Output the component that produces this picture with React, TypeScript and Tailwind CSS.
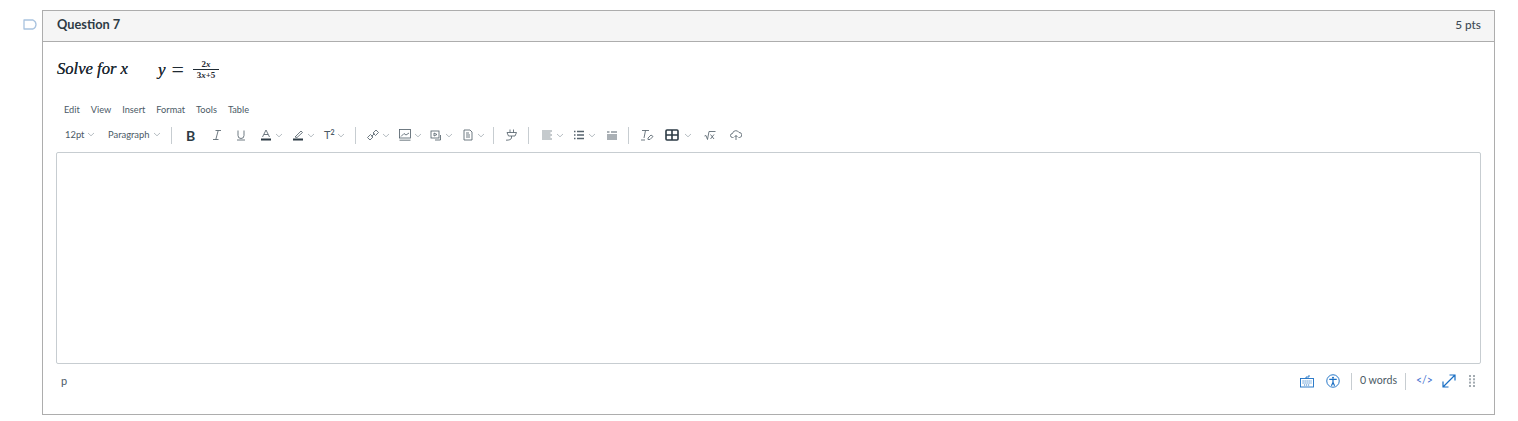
import React from 'react';

const Chevron = ({ className = 'ml-[3px]' }: { className?: string }) => (
  <svg width="8" height="5" viewBox="0 0 8 5" fill="none" stroke="#98a2a9" strokeWidth="0.7" className={className}>
    <path d="M1 1 L4 3.8 L7 1" />
  </svg>
);

const Divider = () => <div className="h-[17px] w-px bg-[#c7cdd1]" />;

const Ico = ({ children, w = 12 }: { children: React.ReactNode; w?: number }) => (
  <svg width={w} height="12" viewBox={`0 0 ${w} 12`} fill="none" stroke="#56636d" strokeWidth="0.85">
    {children}
  </svg>
);

export default function App() {
  return (
    <div className="flex h-[421px] w-[1518px] bg-white pt-[10px] font-['Lato','Noto_Sans',sans-serif] text-[#2d3b45]">
      {/* Flag */}
      <div className="w-[42px] pl-[23px] pt-[9px]">
        <svg width="14" height="11" viewBox="0 0 14 11" fill="none" stroke="#a9c3df" strokeWidth="1.3">
          <path d="M1 1 H10 Q13 2.5 13 5.5 Q13 8.5 10 10 H1 Z" strokeLinejoin="round" />
        </svg>
      </div>

      {/* Question card */}
      <div className="h-[405px] w-[1453px] border border-[#adadad]">
        <div className="flex h-[31px] items-center justify-between border-b border-[#adadad] bg-[#f5f5f5] pb-[2px] pl-[14px] pr-[13px]">
          <span className="text-[12.8px] font-bold">Question 7</span>
          <span className="text-[11.8px] font-medium text-[#3d4b56]">5 pts</span>
        </div>

        <div className="px-[13px]">
          {/* Prompt */}
          <div className="flex h-[60px] items-center pb-[5px] pl-[1px] font-['Liberation_Serif',serif] text-[#1f2a33]">
            <span className="w-[101px] text-[16.6px] italic [text-shadow:0_0_0.3px_#1f2a33]">Solve for x</span>
            <span className="text-[17px] italic [text-shadow:0_0_0.3px_#1f2a33]">y</span>
            <span className="ml-[6px] text-[22px] leading-none">=</span>
            <span className="ml-[9px] flex flex-col items-center text-[9px] font-bold leading-[10px]">
              <span className="w-[26px] border-b border-[#1f2a33] text-center">2<i>x</i></span>
              <span>3<i>x</i>+5</span>
            </span>
          </div>

          {/* Menu bar */}
          <div className="flex h-[16px] items-center gap-[11px] pl-[8px] text-[9.2px] text-[#4b5a66]">
            <span>Edit</span>
            <span>View</span>
            <span>Insert</span>
            <span>Format</span>
            <span>Tools</span>
            <span>Table</span>
          </div>

          {/* Toolbar */}
          <div className="mt-[6px] flex h-[22px] items-center pl-[9px] text-[9.4px] text-[#4b5a66]">
            <span className="flex w-[43px] items-center">12pt<Chevron /></span>
            <span className="flex w-[63px] items-center">Paragraph<Chevron className="ml-[3px]" /></span>
            <Divider />
            <span className="ml-[14px] w-[25px] text-[14px] font-bold text-[#2d3b45]">B</span>
            <span className="flex w-[24px]">
              <Ico><path d="M4.5 1.5 H10 M7.2 1.5 L4.8 10.5 M2 10.5 H7.5" /></Ico>
            </span>
            <span className="flex w-[25px]">
              <Ico><path d="M3 1.5 V6.5 A3 3 0 0 0 9 6.5 V1.5 M2 11 H10" /></Ico>
            </span>
            <span className="flex w-[32px] items-center">
              <Ico><path d="M2.5 8 L6 1 L9.5 8 M4 5.5 H8" /><rect x="1" y="9.5" width="10" height="2" fill="#2d3b45" stroke="none" /></Ico>
              <Chevron />
            </span>
            <span className="flex w-[32px] items-center">
              <Ico><path d="M3 8 L9 2 L10.5 3.5 L5 8.5 Z" /><rect x="1" y="9.5" width="10" height="2" fill="#2d3b45" stroke="none" /></Ico>
              <Chevron />
            </span>
            <span className="flex w-[31px] items-center text-[11px]">T<sup className="text-[7px] font-bold">2</sup><Chevron className="ml-[2px]" /></span>
            <Divider />
            <span className="ml-[11px] flex w-[32px] items-center">
              <Ico><path d="M0.5 8.5 L3.5 5.5 L6 8 L3 11 Z M6 4 L9 1 L11.5 3.5 L8.5 6.5 Z M4.5 7.5 L7.5 4.5" /></Ico>
              <Chevron />
            </span>
            <span className="flex w-[31px] items-center">
              <Ico><rect x="0.5" y="0.5" width="11" height="8.5" /><path d="M2 7.5 L5 4.5 L7 6 L10 4 M0.5 11.2 H11.5" /></Ico>
              <Chevron />
            </span>
            <span className="flex w-[32px] items-center">
              <Ico><rect x="1" y="2" width="8" height="7" /><path d="M4 4 L7 5.5 L4 7 Z M10.5 6 V11 H5" /></Ico>
              <Chevron />
            </span>
            <span className="flex w-[31px] items-center">
              <Ico><path d="M2 1 H8 L10 3 V11 H2 Z M4 4 H7 M4 6 H8 M4 8 H8" /></Ico>
              <Chevron />
            </span>
            <Divider />
            <span className="ml-[11px] flex w-[23px]">
              <Ico><path d="M2 3.5 H11.5 L10 7 H3.5 Z M5 0.5 V3.5 M8.5 0.5 V3.5 M6.5 7 V9 Q6 11.2 1 11.2" /></Ico>
            </span>
            <Divider />
            <span className="ml-[12px] flex w-[32px] items-center">
              <Ico><path d="M1 2 H11 M1 4 H9.5 M1 6 H11 M1 8 H9.5 M1 10 H11" stroke="#c5cacd" strokeWidth="2" /></Ico>
              <Chevron />
            </span>
            <span className="flex w-[33px] items-center">
              <Ico><path d="M4 2.5 H11 M4 6 H11 M4 9.5 H11 M1 2.5 H2.5 M1 6 H2.5 M1 9.5 H2.5" strokeWidth="1.3" /></Ico>
              <Chevron />
            </span>
            <span className="flex w-[22px]">
              <Ico><path d="M1 3 H3.5 M5 3 H11 M1 6 H11 M1 8 H11 M1 10 H11" strokeWidth="1.2" /></Ico>
            </span>
            <Divider />
            <span className="ml-[11px] flex w-[25px]">
              <Ico w={14}><path d="M2 1.5 H9 M5.5 1.5 L4 9 M1 11 H5 M8 9 L11 6 L13 7.5 L10 10.5 H8 Z" /></Ico>
            </span>
            <span className="flex w-[39px] items-center">
              <svg width="14" height="12" viewBox="0 0 14 12" fill="none" stroke="#2d3b45" strokeWidth="1.6">
                <rect x="1" y="1" width="12" height="10" rx="1" />
                <path d="M1 6 H13 M7 1 V11" />
              </svg>
              <Chevron className="ml-[5px]" />
            </span>
            <span className="flex w-[26px]">
              <Ico><path d="M0.5 7 L2 6.5 L3.5 10.5 L5 2.5 H11.5 M6.5 5.5 L10 10 M10 5.5 L6.5 10" /></Ico>
            </span>
            <span className="flex">
              <Ico><path d="M3.5 8.5 H2.5 A2 2 0 0 1 2.5 4.5 A3.5 3.5 0 0 1 9 3.5 A2.5 2.5 0 0 1 9.5 8.5 H8.5 M6 11 V6.5 M4.5 8 L6 6.5 L7.5 8" /></Ico>
            </span>
          </div>

          {/* Editor */}
          <div className="mt-[6px] h-[212px] rounded-[2px] border border-[#c7cdd1]" />

          {/* Status bar */}
          <div className="flex h-[34px] items-center justify-between">
            <span className="pl-[5px] text-[11px] text-[#4b5a66]">p</span>
            <div className="flex items-center">
              <svg width="14" height="14" viewBox="0 0 14 14" fill="none" stroke="#1a6fc4" strokeWidth="0.9">
                <rect x="0.5" y="4.5" width="13" height="8.5" />
                <path d="M2.5 7 H11.5 M2.5 9 H11.5 M4 11 H10" strokeDasharray="1.2 0.8" />
                <path d="M6 4.5 V3 H9 V1" />
              </svg>
              <svg width="14" height="14" viewBox="0 0 15 15" fill="none" className="ml-[12px]" stroke="#1a6fc4" strokeWidth="1">
                <circle cx="7.5" cy="7.5" r="6.7" />
                <circle cx="7.5" cy="4" r="1.1" fill="#1a6fc4" stroke="none" />
                <path d="M3.5 5.8 H11.5 M7.5 6 V9 M7.5 9 L5.8 12.5 M7.5 9 L9.2 12.5" strokeWidth="1.3" />
              </svg>
              <div className="ml-[11px] h-[17px] w-px bg-[#c7cdd1]" />
              <span className="ml-[8px] text-[10.6px] text-[#4b5a66]">0 words</span>
              <div className="ml-[8px] h-[17px] w-px bg-[#c7cdd1]" />
              <span className="ml-[10px] flex w-[17px] justify-center text-[10.5px] text-[#3f6fd0]">&lt;/&gt;</span>
              <svg width="14" height="14" viewBox="0 0 14 14" fill="none" className="ml-[9px]" stroke="#1a6fc4" strokeWidth="1.2">
                <path d="M1 13 L13 1 M7.5 1 H13 V6.5 M1 7.5 V13 H6.5" />
              </svg>
              <svg width="6" height="12" viewBox="0 0 6 12" fill="#a3abb1" className="ml-[13px] mr-[6px]">
                <rect x="0" y="0" width="2" height="2" /><rect x="4" y="0" width="2" height="2" />
                <rect x="0" y="3.3" width="2" height="2" /><rect x="4" y="3.3" width="2" height="2" />
                <rect x="0" y="6.6" width="2" height="2" /><rect x="4" y="6.6" width="2" height="2" />
                <rect x="0" y="10" width="2" height="2" /><rect x="4" y="10" width="2" height="2" />
              </svg>
            </div>
          </div>
        </div>
      </div>
    </div>
  );
}
